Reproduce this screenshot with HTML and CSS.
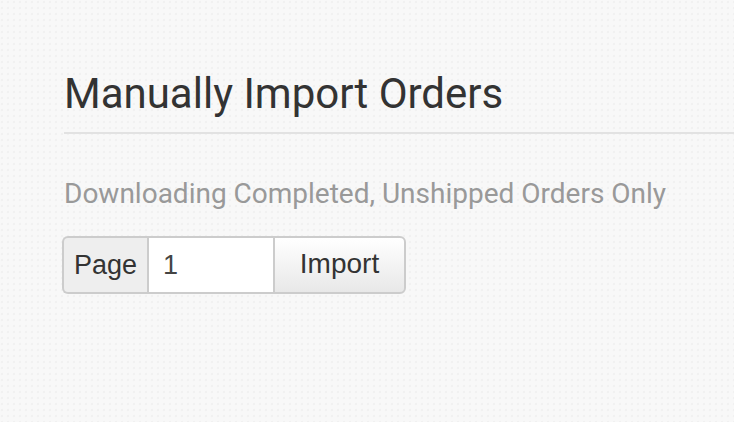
FILE: index.html
```html
<!DOCTYPE html>
<html>
<head>
  <title>Manually Import Orders</title>
  <link rel="stylesheet" href="styles.css">
</head>
<body>
  <div class="container">
    <h2 class="page-header">Manually Import Orders</h2>

    <p class="help-text">Downloading Completed, Unshipped Orders Only</p>

    <form class="input-group">
      <span class="addon">Page</span>
      <input type="text" class="page-input" value="1">
      <button type="button" class="import-button">Import</button>
    </form>
  </div>
</body>
</html>
```

FILE: styles.css
```css
body {
  margin: 0;
  font-family: Roboto, 'Helvetica Neue', Arial, sans-serif;
  color: #333333;
  background-color: #f8f8f8;
  background-image: radial-gradient(circle at 2px 2px, #f1f1f1 1px, transparent 1.6px);
  background-size: 6px 6px;
  min-height: 422px;
}

.container {
  padding: 64px 0 0 64px;
}

.page-header {
  margin: 0;
  padding: 7px 0 15px;
  font-size: 42px;
  line-height: 46px;
  font-weight: 400;
  color: #333333;
  border-bottom: 2px solid #e2e2e2;
}

.help-text {
  margin: 43px 0 26px;
  font-size: 28px;
  color: #999999;
}

.input-group {
  display: flex;
  width: 344px;
  height: 58px;
  margin-left: -2px;
  font-family: 'Liberation Sans', Arial, sans-serif;
  font-size: 27px;
}

.addon {
  display: flex;
  align-items: center;
  padding: 0 10px;
  background-color: #eeeeee;
  border: 2px solid #cccccc;
  border-right: none;
  border-radius: 6px 0 0 6px;
  color: #333333;
}

.page-input {
  width: 126px;
  box-sizing: border-box;
  padding: 0 14px;
  border: 2px solid #cccccc;
  border-right: none;
  font: inherit;
  color: #444444;
  background-color: #ffffff;
  outline: none;
}

.import-button {
  flex: 1;
  padding: 0 0 2px;
  border: 2px solid #cccccc;
  border-radius: 0 6px 6px 0;
  background: linear-gradient(#ffffff, #e8e8e8);
  font: inherit;
  font-size: 28px;
  color: #333333;
  cursor: pointer;
}
```
